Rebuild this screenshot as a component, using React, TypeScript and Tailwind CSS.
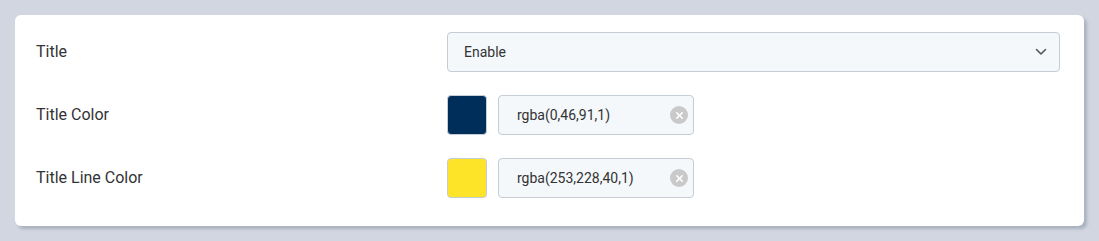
import { X } from "lucide-react";

const colorRows = [
  { label: "Title Color", swatch: "bg-[#002e5b]", value: "rgba(0,46,91,1)" },
  { label: "Title Line Color", swatch: "bg-[#fde428]", value: "rgba(253,228,40,1)" },
];

function Chevron() {
  return (
    <svg width="12" height="8" viewBox="0 0 12 8" fill="none" className="text-[#555]">
      <path d="M1.5 1.5 6 6l4.5-4.5" stroke="currentColor" strokeWidth="1.6" strokeLinecap="round" strokeLinejoin="round" />
    </svg>
  );
}

export default function App() {
  return (
    <div className="h-[241px] w-[1099px] bg-[#d1d6e1] p-[15px] font-['Roboto',sans-serif] text-[#333]">
      <div className="w-[1069px] rounded-md bg-white pb-[28px] pl-[21px] pr-[24px] pt-[17px] shadow-[3px_3px_3px_rgba(60,70,90,0.25)]">
        <div className="flex h-10 items-center">
          <div className="w-[411px] text-base">Title</div>
          <div className="flex h-10 flex-1 items-center justify-between rounded-[4px] border border-[#c6ccd4] bg-[#f5f8fb] pl-4 pr-3 text-sm">
            <span>Enable</span>
            <Chevron />
          </div>
        </div>

        {colorRows.map((row) => (
          <div key={row.label} className="mt-[23px] flex h-10 items-center">
            <div className="w-[411px] text-base">{row.label}</div>
            <div className={`h-10 w-10 rounded-[4px] border border-[#c6ccd4] ${row.swatch}`} />
            <div className="ml-[11px] flex h-10 w-[196px] items-center justify-between rounded-[4px] border border-[#c6ccd4] bg-[#f5f8fb] pl-[18px] pr-[5px] text-sm">
              <span>{row.value}</span>
              <span className="flex h-[18px] w-[18px] items-center justify-center rounded-full bg-[#c9c9c9]">
                <X size={11} strokeWidth={3.5} className="text-white" />
              </span>
            </div>
          </div>
        ))}
      </div>
    </div>
  );
}
